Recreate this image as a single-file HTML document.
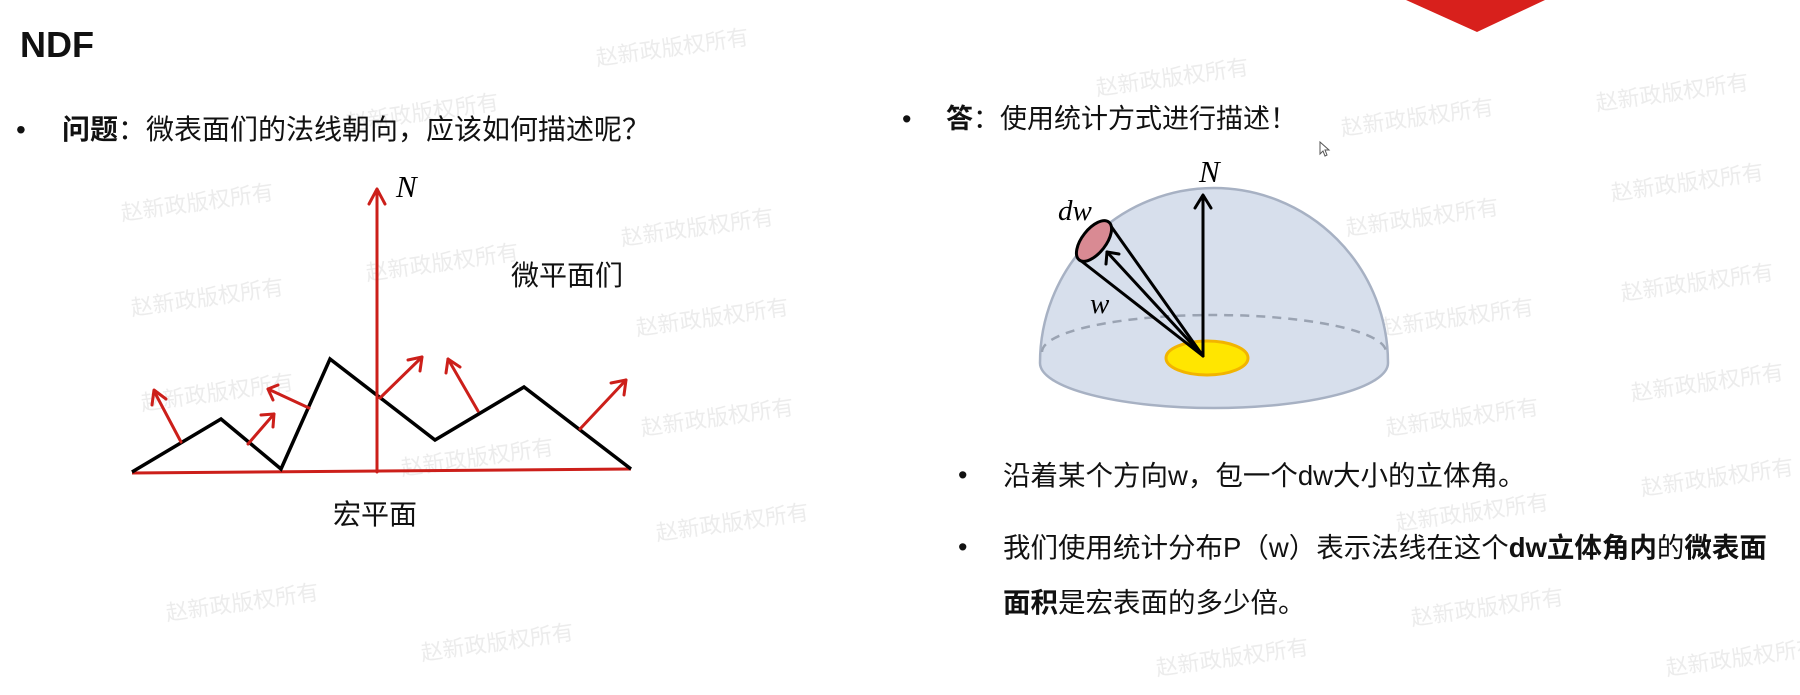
<!DOCTYPE html>
<html><head><meta charset="utf-8"><style>
html,body{margin:0;padding:0;background:#fff;}
body{width:1800px;height:695px;position:relative;overflow:hidden;font-family:"Liberation Sans","Noto Sans CJK SC",sans-serif;color:#111;}
.t{position:absolute;white-space:nowrap;line-height:1;}
.wm{position:absolute;color:#ececec;font-size:22px;transform:rotate(-8deg);white-space:nowrap;}
</style></head><body>
<div class="wm" style="left:595px;top:30px">赵新政版权所有</div>
<div class="wm" style="left:345px;top:95px">赵新政版权所有</div>
<div class="wm" style="left:120px;top:185px">赵新政版权所有</div>
<div class="wm" style="left:365px;top:245px">赵新政版权所有</div>
<div class="wm" style="left:130px;top:280px">赵新政版权所有</div>
<div class="wm" style="left:620px;top:210px">赵新政版权所有</div>
<div class="wm" style="left:140px;top:375px">赵新政版权所有</div>
<div class="wm" style="left:635px;top:300px">赵新政版权所有</div>
<div class="wm" style="left:640px;top:400px">赵新政版权所有</div>
<div class="wm" style="left:400px;top:440px">赵新政版权所有</div>
<div class="wm" style="left:655px;top:505px">赵新政版权所有</div>
<div class="wm" style="left:165px;top:585px">赵新政版权所有</div>
<div class="wm" style="left:420px;top:625px">赵新政版权所有</div>
<div class="wm" style="left:1095px;top:60px">赵新政版权所有</div>
<div class="wm" style="left:1595px;top:75px">赵新政版权所有</div>
<div class="wm" style="left:1340px;top:100px">赵新政版权所有</div>
<div class="wm" style="left:1610px;top:165px">赵新政版权所有</div>
<div class="wm" style="left:1345px;top:200px">赵新政版权所有</div>
<div class="wm" style="left:1620px;top:265px">赵新政版权所有</div>
<div class="wm" style="left:1380px;top:300px">赵新政版权所有</div>
<div class="wm" style="left:1630px;top:365px">赵新政版权所有</div>
<div class="wm" style="left:1385px;top:400px">赵新政版权所有</div>
<div class="wm" style="left:1640px;top:460px">赵新政版权所有</div>
<div class="wm" style="left:1395px;top:495px">赵新政版权所有</div>
<div class="wm" style="left:1410px;top:590px">赵新政版权所有</div>
<div class="wm" style="left:1665px;top:640px">赵新政版权所有</div>
<div class="wm" style="left:1155px;top:640px">赵新政版权所有</div>

<svg width="1800" height="695" style="position:absolute;left:0;top:0">
<polygon points="1406,0 1545,0 1477,32" fill="#d8201c"/>
<line x1="132" y1="473" x2="631" y2="469" stroke="#cc1f1a" stroke-width="3"/>
<polyline points="132,472 221,419 281,469 330,359 435,440 524,387 631,469" fill="none" stroke="#000" stroke-width="3.5"/>
<g stroke="#cc1f1a" stroke-width="3" fill="none" stroke-linecap="round" stroke-linejoin="round">
<line x1="377" y1="472" x2="377" y2="190"/><polyline points="369,204 377,189 385,204"/>
<line x1="181" y1="442" x2="154" y2="391"/>
<line x1="248" y1="444" x2="274" y2="414"/>
<line x1="309" y1="408" x2="268" y2="389"/>
<line x1="380" y1="398" x2="422" y2="357"/>
<line x1="478" y1="411" x2="448" y2="359"/>
<line x1="580" y1="429" x2="626" y2="380"/>
<polyline points="152,405 154,390 166,399"/>
<polyline points="261,415 274,414 273,427"/>
<polyline points="278,385 268,389 273,400"/>
<polyline points="408,360 422,357 420,371"/>
<polyline points="446,373 448,359 460,367"/>
<polyline points="611,383 626,380 624,395"/>
</g>
<path d="M1040,363 A174,175 0 0 1 1388,363 A174,45 0 0 1 1040,363 Z" fill="#d7dfec" stroke="#a7b1c3" stroke-width="2.5"/>
<path d="M1042,352 A172,37 0 0 1 1386,352" fill="none" stroke="#9aa3b2" stroke-width="2.5" stroke-dasharray="9,7"/>
<ellipse cx="1207" cy="358" rx="41" ry="17" fill="#ffe600" stroke="#f2b400" stroke-width="3"/>
<polygon points="1203,356 1108,222 1080,260" fill="none" stroke="#000" stroke-width="3" stroke-linejoin="round"/>
<ellipse cx="1094" cy="241" rx="12" ry="24" transform="rotate(38 1094 241)" fill="#d98a93" stroke="#000" stroke-width="3"/>
<g stroke="#000" stroke-width="3" fill="none" stroke-linecap="round" stroke-linejoin="round">
<line x1="1203" y1="356" x2="1107" y2="252"/><polyline points="1106,264 1107,252 1119,254"/>
<line x1="1203" y1="356" x2="1203" y2="196"/><polyline points="1195,208 1203,195 1211,208"/>
</g>
<text x="396" y="197" font-family="Liberation Serif,serif" font-style="italic" font-size="31">N</text>
<text x="1199" y="182" font-family="Liberation Serif,serif" font-style="italic" font-size="31">N</text>
<text x="1058" y="220" font-family="Liberation Serif,serif" font-style="italic" font-size="29">dw</text>
<text x="1090" y="313" font-family="Liberation Serif,serif" font-style="italic" font-size="29">w</text>
<path d="M1320,142 l0,12 l3,-3 l2,5 l2,-1 l-2,-5 l4,0 z" fill="#fff" stroke="#555" stroke-width="1"/>
</svg>

<div class="t" style="left:20px;top:27px;font-size:36px;font-weight:bold;">NDF</div>
<div class="t" style="left:16px;top:116px;font-size:28px;">•</div>
<div class="t" style="left:62px;top:116px;font-size:28px;"><b>问题</b>：微表面们的法线朝向，应该如何描述呢？</div>
<div class="t" style="left:511px;top:262px;font-size:28px;">微平面们</div>
<div class="t" style="left:333px;top:501px;font-size:28px;">宏平面</div>

<div class="t" style="left:902px;top:106px;font-size:27px;">•</div>
<div class="t" style="left:946px;top:106px;font-size:27px;"><b>答</b>：使用统计方式进行描述！</div>
<div class="t" style="left:958px;top:462px;font-size:27px;">•</div>
<div class="t" style="left:1003px;top:462px;font-size:27.5px;">沿着某个方向w，包一个dw大小的立体角。</div>
<div class="t" style="left:958px;top:534px;font-size:27px;">•</div>
<div class="t" style="left:1003px;top:534px;font-size:27.5px;">我们使用统计分布P（w）表示法线在这个<b>dw立体角内</b>的<b>微表面</b></div>
<div class="t" style="left:1003px;top:589px;font-size:27.5px;"><b>面积</b>是宏表面的多少倍。</div>
</body></html>
